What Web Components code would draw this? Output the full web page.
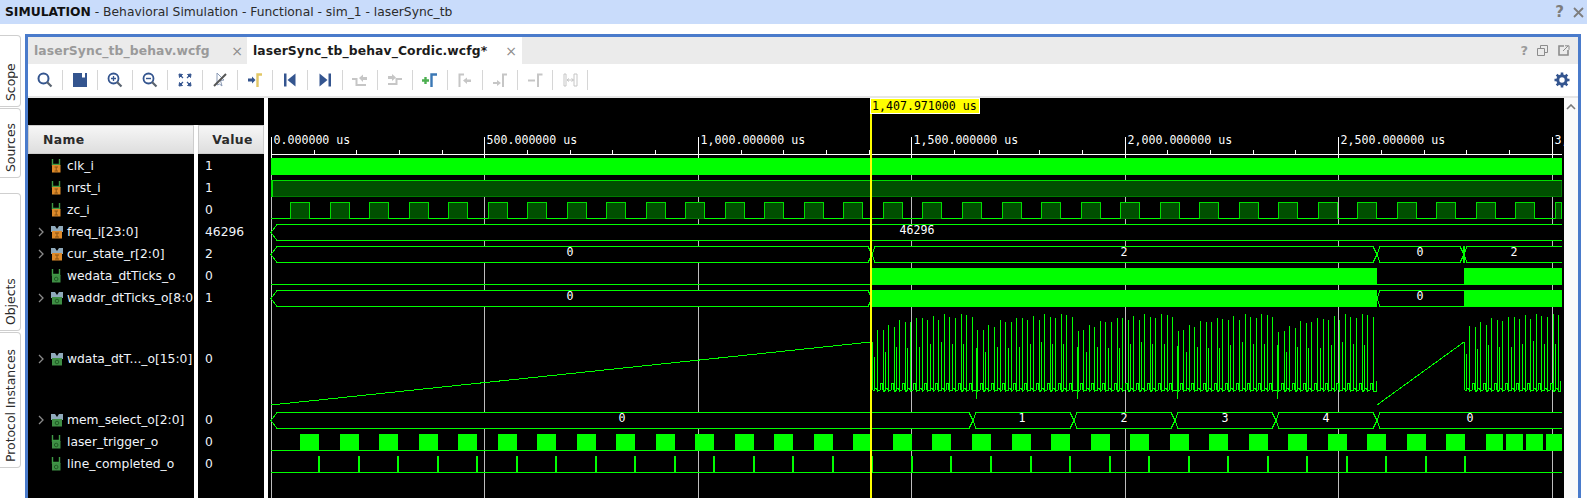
<!DOCTYPE html>
<html>
<head>
<meta charset="utf-8">
<title>Simulation</title>
<style>
  html, body { margin: 0; height: 498px; overflow: hidden; background: #fff; }
  body { display: flex; flex-direction: column; font-family: "DejaVu Sans", sans-serif; }
  .main { display: flex; flex: 1; min-height: 0; margin-top: 10px; }
  #strip { grid-column: 1 / 4; grid-row: 1; background: #000; }
  #names { grid-column: 1; grid-row: 2; }
  #values { grid-column: 3; grid-row: 2; }
  wave-view { grid-column: 5; grid-row: 1 / 3; }
  v-scroll { grid-column: 6; grid-row: 1 / 3; }
</style>
</head>
<body>
<sim-banner></sim-banner>
<div class="main">
  <side-tabs>
    <side-tab label="Scope" style="height:72px"></side-tab>
    <side-tab label="Sources" style="height:70px;margin-bottom:14px"></side-tab>
    <side-tab label="Objects" style="height:138px"></side-tab>
    <side-tab label="Protocol Instances" style="height:136px"></side-tab>
  </side-tabs>
  <wave-window>
    <win-tabs></win-tabs>
    <wave-toolbar></wave-toolbar>
    <wave-body>
      <div id="strip"></div>
      <sig-column heading="Name" id="names"></sig-column>
      <sig-column heading="Value" id="values"></sig-column>
      <wave-view></wave-view>
      <v-scroll></v-scroll>
    </wave-body>
  </wave-window>
</div>
<script>
const BLUE = '#34558f';
const GREY = '#c6c6c6';

class SimBanner extends HTMLElement {
  constructor() {
    super();
    this.attachShadow({ mode: 'open' });
    this.shadowRoot.innerHTML = `
      <style>
        :host { display: flex; align-items: center; height: 24px; flex: none; background: #c9dcfb; color: #2b2b2b; font-size: 12.3px; padding-left: 5px; }
        b { color: #111; margin-right: 4px; }
        .right { margin-left: auto; display: flex; align-items: center; gap: 9px; padding-right: 3px; color: #7d7d7d; }
        .q { font-weight: bold; font-size: 15px; }
      </style>
      <b>SIMULATION</b><span>- Behavioral Simulation - Functional - sim_1 - laserSync_tb</span>
      <div class="right">
        <span class="q">?</span>
        <svg width="11" height="11" viewBox="0 0 11 11"><path d="M1 1L10 10M10 1L1 10" stroke="#7d7d7d" stroke-width="1.8"/></svg>
      </div>`;
  }
}

class SideTabs extends HTMLElement {
  constructor() {
    super();
    this.attachShadow({ mode: 'open' });
    this.shadowRoot.innerHTML = `
      <style>:host { display: flex; flex-direction: column; gap: 1px; width: 25px; flex: none; padding-top: 1px; box-sizing: border-box; }</style>
      <slot></slot>`;
  }
}

class SideTab extends HTMLElement {
  constructor() {
    super();
    this.attachShadow({ mode: 'open' });
  }
  connectedCallback() {
    this.shadowRoot.innerHTML = `
      <style>
        :host { display: flex; flex: none; width: 21px; box-sizing: border-box; border: 1px solid #cfcfcf; border-left: 0; border-radius: 0 4px 4px 0; justify-content: center; color: #2b2b2b; font-size: 12.4px; }
        span { writing-mode: vertical-rl; transform: rotate(180deg); padding-top: 5px; line-height: 19px; white-space: nowrap; }
      </style>
      <span>${this.getAttribute('label')}</span>`;
  }
}

class WaveWindow extends HTMLElement {
  constructor() {
    super();
    this.attachShadow({ mode: 'open' });
    this.shadowRoot.innerHTML = `
      <style>:host { display: flex; flex-direction: column; flex: 1; min-width: 0; margin-right: 6px; border: solid #4a7bcb; border-width: 3px 3px 0 3px; }</style>
      <slot></slot>`;
  }
}

class WinTabs extends HTMLElement {
  constructor() {
    super();
    this.attachShadow({ mode: 'open' });
    this.shadowRoot.innerHTML = `
      <style>
        :host { display: flex; height: 27px; flex: none; background: #ebebeb; font-size: 12.35px; font-weight: bold; }
        .tab { display: flex; align-items: center; box-sizing: border-box; padding-left: 6px; letter-spacing: .1px; }
        .off { width: 219px; color: #9a9a9a; }
        .on { width: 275px; background: #fff; color: #1c1c1c; padding-left: 6px; }
        .x { margin-left: auto; margin-right: 4px; font-weight: normal; font-size: 14px; color: #8c8c8c; }
        .on .x { margin-right: 5px; }
        .right { margin-left: auto; display: flex; align-items: center; gap: 9px; padding-right: 8px; }
        .q { color: #9a9a9a; font-size: 13px; }
      </style>
      <div class="tab off">laserSync_tb_behav.wcfg<span class="x">×</span></div>
      <div class="tab on">laserSync_tb_behav_Cordic.wcfg*<span class="x">×</span></div>
      <div class="right">
        <span class="q">?</span>
        <svg width="11" height="11" viewBox="0 0 11 11"><path d="M3.5 3.5V.5H10.5V7.5H7.5M.5 3.5H7.5V10.5H.5Z" fill="none" stroke="#8c8c8c"/></svg>
        <svg width="12" height="11" viewBox="0 0 12 11" style="margin-left:1px"><path d="M6 1H1V10H10V5" fill="none" stroke="#8c8c8c" stroke-width="1.6"/><path d="M5 6L10 1M7 .8H11V4.8" fill="none" stroke="#8c8c8c"/></svg>
      </div>`;
  }
}

// toolbar glyphs, drawn on an 18x18 box
const TOOL_ICONS = {
  search: `<circle cx="7.5" cy="7.5" r="5" fill="none" stroke="${BLUE}" stroke-width="2"/><path d="M11 11L15.5 15.5" stroke="#5a6470" stroke-width="2.2"/>`,
  save: `<path d="M2 2H16V16H2Z" fill="${BLUE}"/><path d="M11 2H14V6.5H11Z" fill="#fff"/>`,
  zoomin: `<circle cx="7.5" cy="7.5" r="5" fill="none" stroke="${BLUE}" stroke-width="1.8"/><path d="M5 7.5H10M7.5 5V10" stroke="${BLUE}" stroke-width="1.3"/><path d="M11 11L15.5 15.5" stroke="#5a6470" stroke-width="2.2"/>`,
  zoomout: `<circle cx="7.5" cy="7.5" r="5" fill="none" stroke="${BLUE}" stroke-width="1.8"/><path d="M5 7.5H10" stroke="${BLUE}" stroke-width="1.4"/><path d="M11 11L15.5 15.5" stroke="#5a6470" stroke-width="2.2"/>`,
  fit: `<path d="M3 3L6.5 3.5L3.5 6.5ZM15 3L11.5 3.5L14.5 6.5ZM3 15L3.5 11.5L6.5 14.5ZM15 15L14.5 11.5L11.5 14.5Z" fill="${BLUE}" stroke="${BLUE}"/><path d="M4 4L7 7M14 4L11 7M4 14L7 11M14 14L11 11" stroke="${BLUE}" stroke-width="1.2"/>`,
  snap: `<path d="M6 2L13 9L9.5 9.5L11 15L8.5 13L6 14Z" fill="none" stroke="#8a9ab5"/><path d="M3 15L15 3" stroke="#555" stroke-width="2"/>`,
  cursor: `<path d="M2 7.5H6V5.5L9.5 9L6 12.5V10.5H2Z" fill="${BLUE}"/><path d="M11.5 16V3.5H16" fill="none" stroke="#e2c766" stroke-width="2.4"/>`,
  first: `<path d="M3 2.5H5.5V15.5H3Z" fill="${BLUE}"/><path d="M14.5 2.5V15.5L6.5 9Z" fill="${BLUE}"/>`,
  last: `<path d="M12.5 2.5H15V15.5H12.5Z" fill="${BLUE}"/><path d="M3.5 2.5V15.5L11.5 9Z" fill="${BLUE}"/>`,
  prevedge: `<path d="M1 8H5.5V14H15" fill="none" stroke="${GREY}" stroke-width="2"/><path d="M8 7L12 3.5V6H16V9H12V11Z" fill="${GREY}"/>`,
  nextedge: `<path d="M2 13H10.5V8H16" fill="none" stroke="${GREY}" stroke-width="2"/><path d="M2 5H6V3L10 6.5L6 10V8H2Z" fill="${GREY}"/>`,
  addmark: `<path d="M1 9.5H8M4.5 6V13" stroke="#4caf50" stroke-width="2.4"/><path d="M10.5 16V3.5H16" fill="none" stroke="#3b78b5" stroke-width="2.4"/>`,
  prevmark: `<path d="M3.5 16V3.5H8" fill="none" stroke="${GREY}" stroke-width="2"/><path d="M7 9.5L11 6.5V8.5H15V11H11V13Z" fill="${GREY}"/>`,
  nextmark: `<path d="M2 11H6V9L10 12L6 15V13H2Z" fill="${GREY}"/><path d="M12 16V3.5H16" fill="none" stroke="${GREY}" stroke-width="2"/>`,
  delmark: `<path d="M2 9.5H9" stroke="${GREY}" stroke-width="2"/><path d="M12 16V3.5H16.5" fill="none" stroke="${GREY}" stroke-width="2"/>`,
  swap: `<path d="M3 3H5V15H3ZM13 3H16V15H13Z" fill="none" stroke="${GREY}"/><path d="M6 9H12.5M6 9L8 7.5M6 9L8 10.5M12.5 9L10.5 7.5M12.5 9L10.5 10.5" fill="none" stroke="${GREY}"/>`
};

class ToolBtn extends HTMLElement {
  constructor() {
    super();
    this.attachShadow({ mode: 'open' });
  }
  connectedCallback() {
    this.shadowRoot.innerHTML = `
      <style>
        :host { display: flex; align-items: center; justify-content: center; width: 34px; flex: none; margin: 6px 0; border-right: 1px solid #d6d6d6; }
      </style>
      <svg width="18" height="18" viewBox="0 0 18 18">${TOOL_ICONS[this.getAttribute('icon')]}</svg>`;
  }
}

class WaveToolbar extends HTMLElement {
  constructor() {
    super();
    this.attachShadow({ mode: 'open' });
    const names = ['search', 'save', 'zoomin', 'zoomout', 'fit', 'snap', 'cursor', 'first', 'last', 'prevedge', 'nextedge', 'addmark', 'prevmark', 'nextmark', 'delmark', 'swap'];
    this.shadowRoot.innerHTML = `
      <style>
        :host { display: flex; height: 34px; flex: none; box-sizing: border-box; background: #fff; border-bottom: 2px solid #e6e6e6; }
        svg.gear { margin: 7px 7px 0 auto; }
      </style>
      ${names.map(n => `<tool-btn icon="${n}"></tool-btn>`).join('')}
      <svg class="gear" width="18" height="18" viewBox="0 0 18 18"><circle cx="9" cy="9" r="4.2" fill="none" stroke="${BLUE}" stroke-width="3"/><path d="M9 1.5V5M9 13V16.5M1.5 9H5M13 9H16.5M3.7 3.7L6.1 6.1M11.9 11.9L14.3 14.3M14.3 3.7L11.9 6.1M6.1 11.9L3.7 14.3" stroke="${BLUE}" stroke-width="2.6"/></svg>`;
  }
}

class WaveBody extends HTMLElement {
  constructor() {
    super();
    this.attachShadow({ mode: 'open' });
    // columns: names, splitter, values, splitter, waves, scrollbar
    this.shadowRoot.innerHTML = `
      <style>:host { display: grid; flex: 1; min-height: 0; grid-template-columns: 166px 4px 66px 4px 1296px 14px; grid-template-rows: 27px 1fr; background: #fff; }</style>
      <slot></slot>`;
  }
}

class SigColumn extends HTMLElement {
  constructor() {
    super();
    this.attachShadow({ mode: 'open' });
  }
  connectedCallback() {
    const center = this.getAttribute('heading') === 'Value';
    this.shadowRoot.innerHTML = `
      <style>
        :host { display: flex; flex-direction: column; background: #000; overflow: hidden; min-height: 0; }
        .head { height: 29px; flex: none; box-sizing: border-box; margin-bottom: 1px; display: flex; align-items: center; background: linear-gradient(#f6f6f6, #dedede); border: 1px solid #cdcdcd; color: #2b2b2b; font-weight: bold; font-size: 12.4px; letter-spacing: .4px; ${center ? 'justify-content:center;padding-left:3px' : 'padding-left:14px'} }
      </style>
      <div class="head">${this.getAttribute('heading')}</div>
      <slot></slot>`;
  }
}

// small port glyphs in the name column
function portIcon(kind) {
  const out = kind[0] === 'o';
  const col = out ? '#3f8f45' : '#dd8a2a';
  const top = kind[1] === 'b'
    ? `<path d="M0 1H4L6 4L8 1H12V7H0Z" fill="#8fa9bb"/>`
    : `<path d="M1.5 0V7M8.5 0V7M1.5 5.5H8.5" stroke="#3f9a45" stroke-width="1.4" fill="none"/>`;
  const w = kind[1] === 'b' ? 'x="1" width="10"' : 'x="1" width="8.5"';
  const mark = out
    ? `<circle cx="${kind[1] === 'b' ? 6 : 5.2}" cy="10" r="1.8" fill="none" stroke="#1f5c24"/>`
    : `<path d="M${kind[1] === 'b' ? '4 8H8M6 8V12M4 12H8' : '3.5 8H7M5.2 8V12M3.5 12H7'}" fill="none" stroke="#8a5210"/>`;
  return `<svg width="12" height="14" viewBox="0 0 12 14">${top}<rect ${w} y="6" height="7.5" fill="${col}"/>${mark}</svg>`;
}

class SigRow extends HTMLElement {
  constructor() {
    super();
    this.attachShadow({ mode: 'open' });
  }
  connectedCallback() {
    const icon = this.getAttribute('icon');
    const leading = icon ? `
      <span class="chev">${this.hasAttribute('expand') ? '<svg width="6" height="10" viewBox="0 0 6 10"><path d="M1 1L5 5L1 9" fill="none" stroke="#8a8a8a" stroke-width="1.3"/></svg>' : ''}</span>
      <span class="ic">${portIcon(icon)}</span>` : '';
    this.shadowRoot.innerHTML = `
      <style>
        :host { display: flex; align-items: center; flex: none; height: var(--h, 22px); color: #f0f4fa; font-size: 12.3px; white-space: nowrap; padding-left: ${icon ? 10 : 7}px; }
        .chev { width: 13px; display: flex; flex: none; }
        .ic { width: 16px; display: flex; flex: none; }
        span.t { margin-top: -1px; }
      </style>
      ${leading}<span class="t"><slot></slot></span>`;
  }
}

const WAVE_X0 = 271, WAVE_X1 = 1562;
const GRN = '#00ff00';

function line(x1, y1, x2, y2, col, w) {
  return `<path d="M${x1} ${y1}L${x2} ${y2}" stroke="${col || GRN}" stroke-width="${w || 1}" fill="none"/>`;
}
function block(x0, x1, y0, y1) {
  return `<rect x="${x0}" y="${y0}" width="${x1 - x0}" height="${y1 - y0}" fill="${GRN}"/>`;
}
function label(x, y, txt, anchor) {
  return `<text x="${x}" y="${y}" text-anchor="${anchor || 'middle'}">${txt}</text>`;
}

// bus row: cuts are the x centres of the value changes, values sit between them
function bus(top, cuts, values) {
  const bot = top + 16, mid = top + 8;
  const edges = [WAVE_X0 + 3].concat(cuts);
  // bus rows are opaque, the grid does not show through them
  let out = `<rect x="${WAVE_X0 + 2}" y="${top}" width="${WAVE_X1 - WAVE_X0 - 2}" height="17" fill="#000"/>`;
  edges.forEach((e, i) => {
    const end = i + 1 < edges.length ? edges[i + 1] - 4 : WAVE_X1;
    const tip = i === 0 ? e - 3 : e;
    out += `<path d="M${end} ${top}.5L${e + 3} ${top}.5L${tip} ${mid}.5L${e + 3} ${bot}.5L${end} ${bot}.5" fill="none" stroke="${GRN}"/>`;
    if (i + 1 < edges.length) {
      const n = edges[i + 1];
      out += `<path d="M${n - 4} ${top}.5L${n} ${mid}.5L${n - 4} ${bot}.5" fill="none" stroke="${GRN}"/>`;
    }
    const v = values[i];
    if (v) out += label(v[0], top + 10, v[1]);
  });
  return out;
}

// analog trace of the Cordic output: rising bursts of narrow spikes over a rippling base
function spikes(x0, x1, starts) {
  const jitter = [0, 2, -1, 3, -2, 1, 2, -1];
  let d = `M${x0} 342L${x0} 381`;
  let g = 0, n = 0;
  for (let p = x0 + 5; p < x1; p += 5.57) {
    const x = Math.round(p);
    if (g + 1 < starts.length && p >= starts[g + 1]) { g++; n = 0; }
    const k = (p - starts[g]) / 5.57;
    const top = Math.round(333 - 19 * (1 - Math.exp(-k / 6)) + jitter[n % 8]);
    if (n === 0 && g > 0) {
      d += `L${x - 2} 390L${x - 1} 390L${x - 1} ${349 - g}L${x - 1} 399L${x} 390`;
    } else if (n % 2 === 0) {
      const mid = Math.round(356 - 16 * (1 - Math.exp(-k / 7)) + jitter[(n + 3) % 8]);
      d += `L${x - 4} 390L${x - 3} 390L${x - 3} ${mid}L${x - 3} 388L${x - 1} 388L${x - 1} 390`;
    } else {
      d += `L${x - 3} 390L${x - 3} 383L${x - 1} 383L${x - 1} 389`;
    }
    d += `L${x} 389L${x} ${top}L${x} 391L${x + 1} 391`;
    n++;
  }
  d += `L${x1} 391L${x1} 381`;
  return `<path d="${d}" fill="none" stroke="${GRN}"/>`;
}

class WaveView extends HTMLElement {
  constructor() {
    super();
    this.attachShadow({ mode: 'open' });
    this.shadowRoot.innerHTML = `
      <style>
        :host { display: block; background: #000; overflow: hidden; min-height: 0; }
        svg { display: block; shape-rendering: crispEdges; }
        text { font-family: "DejaVu Sans Mono", monospace; font-size: 11.6px; fill: #fff; shape-rendering: auto; }
        .cur { fill: #000; }
      </style>
      <svg width="1296" height="400" viewBox="268 98 1296 400">${this.draw()}</svg>`;
  }
  draw() {
    let s = '';
    const major = 213.43, minor = major / 5;

    // grid and ruler
    for (let i = 0; i < 7; i++) {
      const x = Math.round(WAVE_X0 + i * major);
      s += line(x + .5, 158, x + .5, 498, '#bdbdbd');
      s += line(x + .5, 137, x + .5, 158, '#fff');
    }
    for (let i = 0; i < 31; i++) {
      if (i % 5) {
        const x = Math.round(WAVE_X0 + i * minor);
        if (x < WAVE_X1) s += line(x + .5, 150, x + .5, 154, '#fff');
      }
    }
    s += line(WAVE_X0, 154.5, WAVE_X1, 154.5, '#fff');
    const ticks = ['0.000000 us', '500.000000 us', '1,000.000000 us', '1,500.000000 us', '2,000.000000 us', '2,500.000000 us', '3,'];
    ticks.forEach((t, i) => { s += label(Math.round(WAVE_X0 + i * major) + 2.5, 144, t, 'start'); });

    // clk_i
    s += block(WAVE_X0, WAVE_X1, 158, 175);

    // nrst_i
    s += `<rect x="273" y="181" width="1288" height="15" fill="#004f00"/>`;
    s += line(WAVE_X0 + 1, 180.5, WAVE_X1, 180.5, '#00dd00');
    s += line(273, 196.5, 1561, 196.5, '#007a00');
    s += line(272, 180, 272, 197, '#00dd00', 2);
    s += line(1561.5, 181, 1561.5, 197, '#007a00');

    // zc_i
    let zx = WAVE_X0;
    for (let i = 0; i < 33; i++) {
      const a = Math.round(290 + i * 39.53), b = Math.min(a + 20, WAVE_X1);
      s += line(zx, 218.5, a, 218.5);
      s += `<rect x="${a + 1}" y="203" width="${b - a - 2}" height="15" fill="#004f00"/>`;
      s += `<path d="M${a + .5} 219V202.5H${b - .5}V219" fill="none" stroke="#00dd00"/>`;
      s += line(a + 1, 218.5, b - 1, 218.5, '#007a00');
      zx = b;
    }

    // freq_i, cur_state_r
    s += bus(224, [], []);
    s += label(917, 234, '46296');
    s += bus(246, [872, 1377, 1464], [[570, '0'], [1124, '2'], [1420, '0'], [1514, '2']]);
    s += block(1463, 1465, 246, 263);

    // wedata_dtTicks_o
    s += line(WAVE_X0, 284.5, 871, 284.5);
    s += line(1377, 284.5, 1464, 284.5);
    s += block(871, 1377, 268, 285);
    s += block(1464, WAVE_X1, 268, 285);

    // waddr_dtTicks_o
    s += bus(290, [872, 1377], [[570, '0'], [1420, '0']]);
    s += block(871, 1377, 290, 307);
    s += block(1464, WAVE_X1, 290, 307);

    // wdata: two ramps with spike bursts after them
    s += line(WAVE_X0, 405, 871, 342);
    s += line(1377, 405, 1464, 342);
    s += spikes(872, 1376, [872, 972.3, 1073.3, 1174.3, 1275.5]);
    s += spikes(1464, 1560, [1455]);

    // mem_select_o
    s += bus(412, [973, 1074, 1175, 1276, 1377], [[622, '0'], [1022, '1'], [1124, '2'], [1225, '3'], [1326, '4'], [1470, '0']]);

    // laser_trigger_o
    s += line(WAVE_X0, 450.5, WAVE_X1, 450.5);
    for (let i = 0; i < 30; i++) {
      const a = Math.round(300 + i * 39.53);
      s += block(a, a + 19, 434, 451);
    }
    s += block(1486, 1503, 434, 451) + block(1506, 1523, 434, 451) + block(1526, 1543, 434, 451) + block(1546, WAVE_X1, 434, 451);

    // line_completed_o
    s += line(WAVE_X0, 472.5, WAVE_X1, 472.5);
    for (let i = 0; i < 30; i++) {
      const a = Math.round(318 + i * 39.53);
      s += block(a, a + 2, 456, 473);
    }

    // main cursor
    s += block(870, 872, 113, 498).replace(GRN, '#ffff00');
    s += `<rect x="870.5" y="98.5" width="109" height="15" fill="#ffff00" stroke="#fff"/>`;
    s += `<text class="cur" x="872" y="110">1,407.971000 us</text>`;
    return s;
  }
}

class VScroll extends HTMLElement {
  constructor() {
    super();
    this.attachShadow({ mode: 'open' });
    this.shadowRoot.innerHTML = `
      <style>
        :host { display: flex; justify-content: center; align-items: flex-start; background: #fafafa; padding-top: 6px; box-sizing: border-box; }
      </style>
      <svg width="10" height="6" viewBox="0 0 10 6"><path d="M1 5L5 1L9 5" fill="none" stroke="#7a7a7a" stroke-width="1.6"/></svg>`;
  }
}

customElements.define('sim-banner', SimBanner);
customElements.define('side-tabs', SideTabs);
customElements.define('side-tab', SideTab);
customElements.define('wave-window', WaveWindow);
customElements.define('win-tabs', WinTabs);
customElements.define('tool-btn', ToolBtn);
customElements.define('wave-toolbar', WaveToolbar);
customElements.define('wave-body', WaveBody);
customElements.define('sig-column', SigColumn);
customElements.define('sig-row', SigRow);
customElements.define('wave-view', WaveView);
customElements.define('v-scroll', VScroll);

const SIGNALS = [
  ['clk_i', '1', 'is'],
  ['nrst_i', '1', 'is'],
  ['zc_i', '0', 'is'],
  ['freq_i[23:0]', '46296', 'ib', 1],
  ['cur_state_r[2:0]', '2', 'ib', 1],
  ['wedata_dtTicks_o', '0', 'os'],
  ['waddr_dtTicks_o[8:0]', '1', 'ob', 1],
  ['wdata_dtT..._o[15:0]', '0', 'ob', 1, 100],
  ['mem_select_o[2:0]', '0', 'ob', 1],
  ['laser_trigger_o', '0', 'os'],
  ['line_completed_o', '0', 'os']
];
const names = document.getElementById('names');
const values = document.getElementById('values');
SIGNALS.forEach(([name, value, icon, expand, h]) => {
  const a = document.createElement('sig-row');
  a.setAttribute('icon', icon);
  if (expand) a.setAttribute('expand', '');
  a.textContent = name;
  const b = document.createElement('sig-row');
  b.textContent = value;
  if (h) { a.style.setProperty('--h', h + 'px'); b.style.setProperty('--h', h + 'px'); }
  names.appendChild(a);
  values.appendChild(b);
});
</script>
</body>
</html>
